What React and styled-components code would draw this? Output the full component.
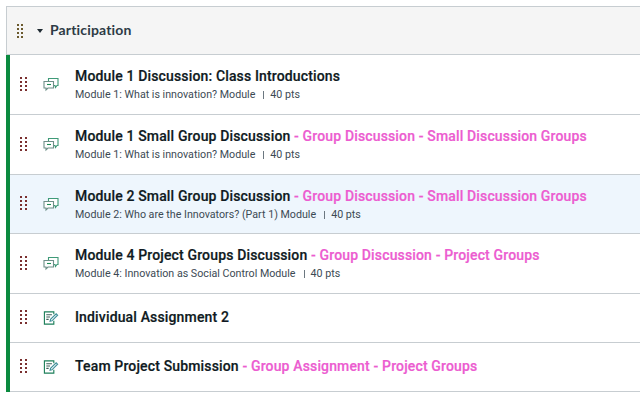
import React from 'react'
import styled, { createGlobalStyle } from 'styled-components'

const Global = createGlobalStyle`
  html, body { margin: 0; padding: 0; background: #fff; }
  body { width: 640px; height: 400px; overflow: hidden; font-family: Roboto, Arial, sans-serif; }
`

const Page = styled.div`
  padding: 6px 0 0 6px;
`

const Panel = styled.div`
  border-left: 1px solid #c7cdd1;
  border-top: 1px solid #c7cdd1;
`

const Header = styled.div`
  display: flex;
  align-items: center;
  height: 47px;
  background: #f5f5f5;
  border-bottom: 1px solid #c7cdd1;
  padding-left: 9px;
`

const Caret = styled.span`
  width: 0;
  height: 0;
  margin-left: 13px;
  border-left: 3px solid transparent;
  border-right: 3px solid transparent;
  border-top: 4px solid #1f2a32;
`

const HeaderTitle = styled.span`
  margin-left: 7px;
  margin-top: -2px;
  font-family: Lato, sans-serif;
  font-weight: 700;
  font-size: 14px;
  letter-spacing: 0.15px;
  color: #2d3b45;
`

const List = styled.div`
  margin-left: -1px;
  border-left: 4px solid #0b8a3f;
`

const Row = styled.div`
  display: flex;
  align-items: center;
  height: ${p => p.$height}px;
  background: ${p => (p.$active ? '#eef6fd' : '#fff')};
  border-bottom: 1px solid #c7cdd1;
  padding-left: 9px;
`

const RowGrip = styled.div`
  display: flex;
  margin-top: -2px;
`

const IconSlot = styled.div`
  display: flex;
  margin-left: 16px;
  width: 16px;
  justify-content: center;
`

const Body = styled.div`
  margin-left: 16px;
  margin-top: ${p => (p.$hasMeta ? 0 : -2)}px;
  display: flex;
  flex-direction: column;
  gap: 3px;
`

const Title = styled.div`
  font-weight: 500;
  font-size: 14px;
  line-height: 18px;
  letter-spacing: 0.15px;
  color: #0f1a22;
  -webkit-text-stroke: 0.2px #0f1a22;
  white-space: nowrap;
`

const Tag = styled.span`
  color: #ec5cd0;
  -webkit-text-stroke: 0.2px #ec5cd0;
`

const Meta = styled.div`
  display: flex;
  font-size: 10.7px;
  line-height: 14px;
  color: #3c4a54;
  white-space: nowrap;
`

const Points = styled.span`
  margin-left: 8px;
  padding-left: 7px;
  position: relative;
  &::before {
    content: '';
    position: absolute;
    left: 0;
    top: 3px;
    height: 8px;
    border-left: 1px solid #6b7780;
  }
`

const Grip = ({ color, spread = 4 }) => (
  <svg width="8" height="16" viewBox="0 0 8 16" fill={color}>
    {[0, 4, 8, 12].map(y => (
      <g key={y}>
        <rect x="1" y={y + 1} width="2" height="2" />
        <rect x={1 + spread} y={y + 1} width="2" height="2" />
      </g>
    ))}
  </svg>
)

const DiscussionIcon = () => (
  <svg width="16" height="15" viewBox="0 0 16 15" fill="#fff" strokeWidth="1.1">
    <path d="M5.5 1.5h9.5v7h-1l-1.5 2-.5-2H5.5z" stroke="#3f9a78" />
    <path d="M1 4.5h9.5v6.5H5l-2 2v-2H1z" stroke="#6d8f88" />
    <path d="M4 7.5h4" stroke="#1d8a55" />
  </svg>
)

const AssignmentIcon = () => (
  <svg width="17" height="16" viewBox="0 0 17 16" fill="none" strokeWidth="1.2">
    <path d="M11.5 11v3.5H1.5v-13h10V4" stroke="#1d7f5a" />
    <path d="M3.5 4.5h6M3.5 7h4M3.5 9.5h2.5" stroke="#3c5f58" />
    <path d="M7.5 11.5l.5-2 6-6 1.5 1.5-6 6z" stroke="#3f8f9a" />
  </svg>
)

const items = [
  { title: 'Module 1 Discussion: Class Introductions', meta: 'Module 1: What is innovation? Module', icon: 'd', height: 59 },
  { title: 'Module 1 Small Group Discussion', tag: ' - Group Discussion - Small Discussion Groups', meta: 'Module 1: What is innovation? Module', icon: 'd', height: 59 },
  { title: 'Module 2 Small Group Discussion', tag: ' - Group Discussion - Small Discussion Groups', meta: 'Module 2: Who are the Innovators? (Part 1) Module', icon: 'd', height: 58, active: true },
  { title: 'Module 4 Project Groups Discussion', tag: ' - Group Discussion - Project Groups', meta: 'Module 4: Innovation as Social Control Module', icon: 'd', height: 59 },
  { title: 'Individual Assignment 2', icon: 'a', height: 48 },
  { title: 'Team Project Submission', tag: ' - Group Assignment - Project Groups', icon: 'a', height: 48 },
]

export default function App() {
  return (
    <Page>
      <Global />
      <Panel>
        <Header>
          <Grip color="#6b5a2e" />
          <Caret />
          <HeaderTitle>Participation</HeaderTitle>
        </Header>
        <List>
          {items.map(item => (
            <Row key={item.title} $height={item.height} $active={item.active}>
              <RowGrip><Grip color="#7a2f2f" spread={5} /></RowGrip>
              <IconSlot>{item.icon === 'd' ? <DiscussionIcon /> : <AssignmentIcon />}</IconSlot>
              <Body $hasMeta={!!item.meta}>
                <Title>
                  {item.title}
                  {item.tag && <Tag>{item.tag}</Tag>}
                </Title>
                {item.meta && (
                  <Meta>
                    {item.meta}
                    <Points>40 pts</Points>
                  </Meta>
                )}
              </Body>
            </Row>
          ))}
        </List>
      </Panel>
    </Page>
  )
}
